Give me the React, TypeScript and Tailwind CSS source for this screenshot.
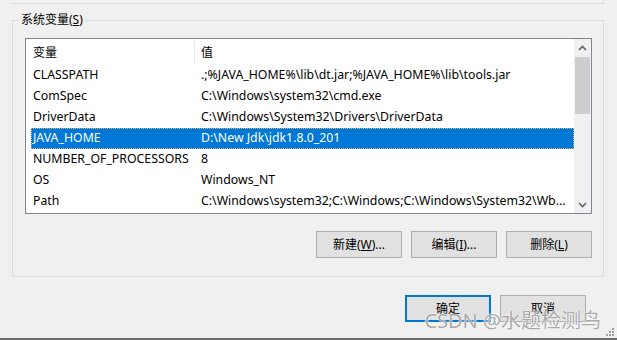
const rows: [string, string][] = [
  ["CLASSPATH", ".;%JAVA_HOME%\\lib\\dt.jar;%JAVA_HOME%\\lib\\tools.jar"],
  ["ComSpec", "C:\\Windows\\system32\\cmd.exe"],
  ["DriverData", "C:\\Windows\\System32\\Drivers\\DriverData"],
  ["JAVA_HOME", "D:\\New Jdk\\jdk1.8.0_201"],
  ["NUMBER_OF_PROCESSORS", "8"],
  ["OS", "Windows_NT"],
  ["Path", "C:\\Windows\\system32;C:\\Windows;C:\\Windows\\System32\\Wb..."],
];

function Button({ children, focused }: { children: React.ReactNode; focused?: boolean }) {
  return (
    <div
      className={
        focused
          ? "w-[86px] h-[27px] flex items-center justify-center bg-[#e1e1e1] border-2 border-[#0078d7]"
          : "w-[86px] h-[27px] flex items-center justify-center bg-[#e1e1e1] border border-[#adadad]"
      }
    >
      {children}
    </div>
  );
}

export default function App() {
  return (
    <div
      className="relative w-[617px] h-[340px] overflow-hidden bg-[#f0f0f0] border-b-2 border-[#6b6b6b] text-[12px] text-black"
      style={{ fontFamily: '"Noto Sans", "Noto Sans CJK SC", sans-serif' }}
    >
      {/* bottom of the group above */}
      <div className="ml-[12px] w-[592px] h-[4px] border-b border-r border-[#dcdcdc]" />

      {/* 系统变量 group */}
      <div className="relative ml-[12px] mt-[16px] w-[592px] h-[257px] border border-[#dcdcdc] pt-[17px] pl-[12px] pr-[11px]">
        <span className="absolute -top-[9px] left-[6px] px-[2px] bg-[#f0f0f0] leading-[16px]">
          系统变量(<span className="underline">S</span>)
        </span>

        <div className="flex w-[567px] h-[176px] border border-[#828790] bg-white text-[12.3px]">
          <div className="flex-1 flex flex-col">
            <div className="flex items-center h-[26px] pt-[1px] ml-[5px] text-[12px]">
              <div className="w-[164px] h-[23px] pl-[2px] flex items-center border-r border-[#e5e5e5]">变量</div>
              <div className="pl-[6px]">值</div>
            </div>
            {rows.map(([name, value]) => {
              const sel = name === "JAVA_HOME";
              return (
                <div
                  key={name}
                  className={
                    sel
                      ? "flex items-center h-[21px] ml-[5px] bg-[#0078d7] text-white border border-dotted border-[#e0b070]"
                      : "flex items-center h-[21px] ml-[5px] border border-transparent"
                  }
                >
                  <div className="w-[167px] pl-[1px] whitespace-nowrap">{name}</div>
                  <div className="pl-[2px] whitespace-nowrap">{value}</div>
                </div>
              );
            })}
          </div>

          {/* scrollbar */}
          <div className="w-[17px] flex flex-col bg-[#f0f0f0]">
            <div className="h-[17px] flex items-center justify-center">
              <svg width="9" height="6" viewBox="0 0 9 6">
                <polyline points="1,5 4.5,1.5 8,5" fill="none" stroke="#606060" strokeWidth="1.6" />
              </svg>
            </div>
            <div className="mx-[1px] mt-[1px] h-[57px] bg-[#cdcdcd]" />
            <div className="flex-1" />
            <div className="h-[17px] flex items-center justify-center">
              <svg width="9" height="6" viewBox="0 0 9 6">
                <polyline points="1,1 4.5,4.5 8,1" fill="none" stroke="#606060" strokeWidth="1.6" />
              </svg>
            </div>
          </div>
        </div>

        <div className="flex justify-end gap-[9px] mt-[17px]">
          <Button>
            新建(<span className="underline">W</span>)...
          </Button>
          <Button>
            编辑(<span className="underline">I</span>)...
          </Button>
          <Button>
            删除(<span className="underline">L</span>)
          </Button>
        </div>
      </div>

      <div className="flex justify-end gap-[9px] mt-[18px] pr-[31px]">
        <Button focused>确定</Button>
        <Button>取消</Button>
      </div>

      {/* watermark */}
      <div
        className="absolute right-[16px] bottom-[5px] text-[20px] leading-[24px] text-[rgba(130,130,130,0.7)] whitespace-nowrap [text-shadow:0_0_1px_#fff,0_0_2px_#fff]"
        style={{ fontFamily: '"Noto Sans", "Noto Sans CJK SC", sans-serif' }}
      >
        CSDN @水题检测鸟
      </div>

      {/* size grip */}
      <svg className="absolute right-[2px] bottom-[1px]" width="10" height="10" viewBox="0 0 10 10">
        <rect x="7" y="1" width="2" height="2" fill="#a0a0a0" />
        <rect x="4" y="4" width="2" height="2" fill="#a0a0a0" />
        <rect x="7" y="4" width="2" height="2" fill="#a0a0a0" />
        <rect x="1" y="7" width="2" height="2" fill="#a0a0a0" />
        <rect x="4" y="7" width="2" height="2" fill="#a0a0a0" />
        <rect x="7" y="7" width="2" height="2" fill="#a0a0a0" />
      </svg>
    </div>
  );
}
